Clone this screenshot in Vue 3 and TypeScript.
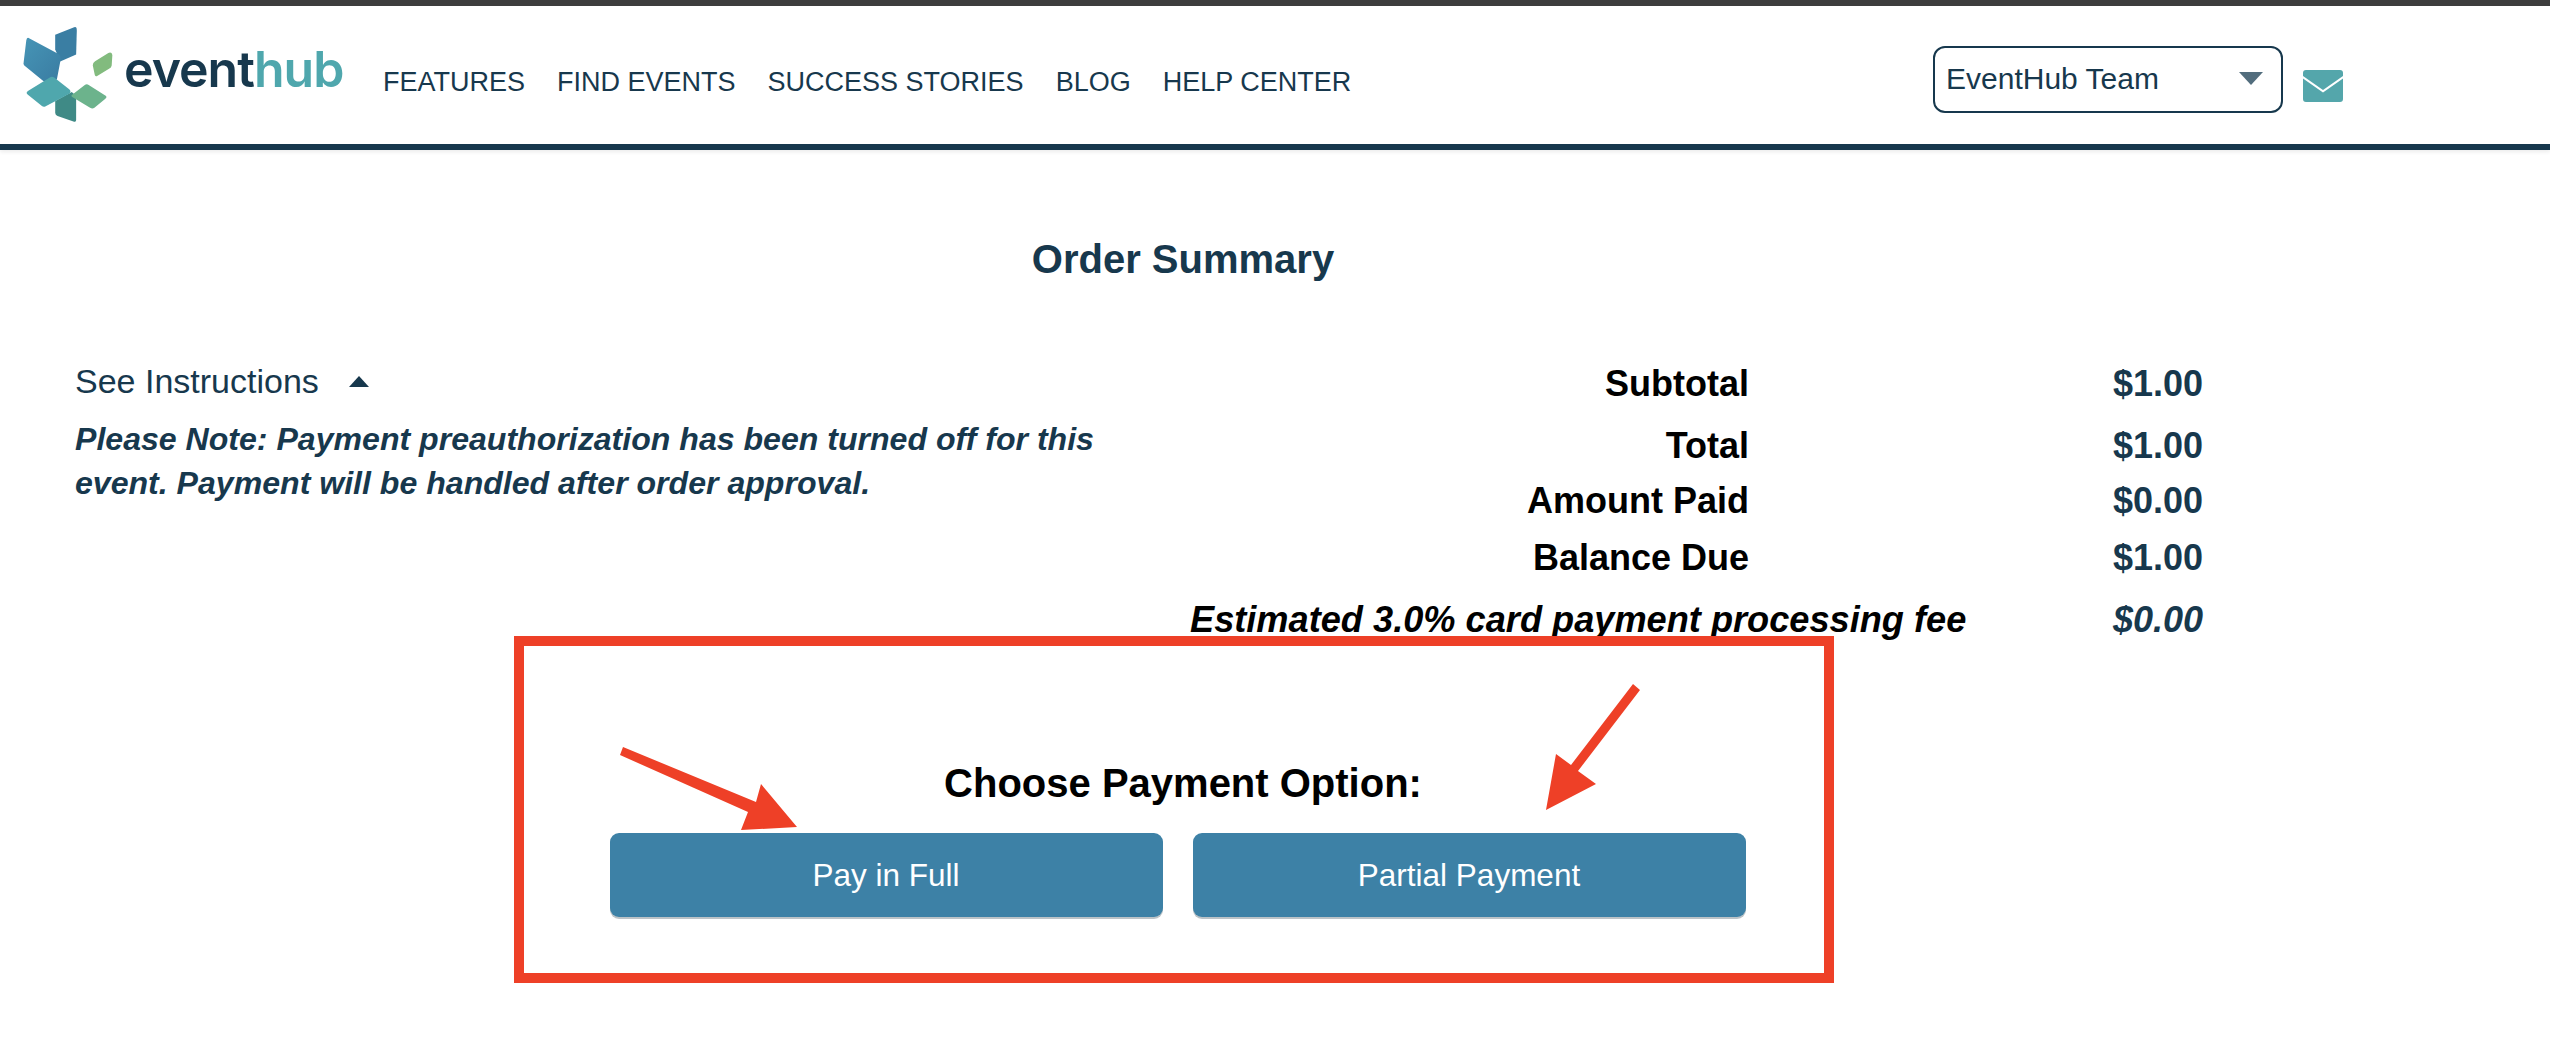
<script setup lang="ts">
const navLinks: string[] = ['FEATURES', 'FIND EVENTS', 'SUCCESS STORIES', 'BLOG', 'HELP CENTER']

const totals = [
  { label: 'Subtotal', value: '$1.00', height: 64 },
  { label: 'Total', value: '$1.00', height: 60 },
  { label: 'Amount Paid', value: '$0.00', height: 50 },
  { label: 'Balance Due', value: '$1.00', height: 64 },
]
</script>

<template>
  <div class="page">
    <header class="topbar">
      <svg class="logo-mark" viewBox="60 70 290 310" aria-hidden="true">
        <defs>
          <linearGradient id="blueGrad" x1="0" y1="0" x2="1" y2="1">
            <stop offset="0" stop-color="#4695b6" />
            <stop offset="1" stop-color="#3a7ca2" />
          </linearGradient>
        </defs>
        <path fill="#3a7ea3" d="M165 105 L222 83 Q230 80 230 92 L228 165 L180 186 L165 150 Z" />
        <path fill="url(#blueGrad)" d="M85 115 L175 163 Q183 170 181 182 L170 240 L130 245 L72 198 Q68 194 70 188 L78 122 Q80 113 85 115 Z" />
        <path fill="#3f8a86" d="M165 305 L215 278 L228 290 L228 362 Q228 369 222 367 L172 350 Q165 347 165 340 Z" />
        <path fill="#4fa7ad" d="M150 233 Q156 230 162 234 L208 270 Q215 277 206 284 L135 321 Q130 323 125 320 L82 285 Q75 280 84 274 Z" />
        <path fill="#6cb38c" d="M255 256 Q260 253 267 257 L318 290 Q322 294 316 298 L283 325 Q277 329 270 325 L215 292 Q212 288 216 286 Z" />
        <path fill="#82bb7e" d="M285 185 L325 160 Q335 156 337 166 L335 198 Q334 205 327 208 L290 230 Q285 232 284 226 L278 197 Q278 190 285 185 Z" />
      </svg>
      <div class="logo-text">event<span>hub</span></div>

      <nav class="nav">
        <a v-for="link in navLinks" :key="link" class="nav-link">{{ link }}</a>
      </nav>

      <div class="team-select">
        <span>EventHub Team</span>
        <i class="select-caret"></i>
      </div>
      <svg class="mail-icon" viewBox="0 0 40 32" aria-hidden="true">
        <path fill="#54a6ab" d="M3 0 H37 Q40 0 40 3 V6 L20 20 L0 6 V3 Q0 0 3 0 Z" />
        <path fill="#54a6ab" d="M0 8.5 L20 22.5 L40 8.5 V29 Q40 32 37 32 H3 Q0 32 0 29 Z" />
      </svg>
    </header>

    <main class="content">
      <h1 class="title">Order Summary</h1>

      <div class="summary">
        <section class="instructions">
          <div class="see-instructions">
            See Instructions
            <i class="up-caret"></i>
          </div>
          <p class="note">
            Please Note: Payment preauthorization has been turned off for this event. Payment will be handled after order approval.
          </p>
        </section>

        <section class="totals">
          <div
            v-for="row in totals"
            :key="row.label"
            class="total-row"
            :style="{ height: row.height + 'px' }"
          >
            <span class="total-label">{{ row.label }}</span>
            <span class="total-value">{{ row.value }}</span>
          </div>
          <div class="total-row fee-row">
            <span class="total-label">Estimated 3.0% card payment processing fee</span>
            <span class="total-value">$0.00</span>
          </div>
        </section>
      </div>

      <section class="payment-box">
        <h2 class="payment-title">Choose Payment Option:</h2>
        <div class="payment-buttons">
          <button class="pay-btn">Pay in Full</button>
          <button class="pay-btn">Partial Payment</button>
        </div>
      </section>
    </main>

    <!-- red annotation arrows drawn over the page -->
    <svg class="arrows" viewBox="0 0 2550 1054" aria-hidden="true">
      <polygon fill="#ee4027" points="623,747 620,755 748,812 741,830 797,827 761,784 756,802" />
      <polygon fill="#ee4027" points="1633,684 1640,690 1578,771 1596,784 1546,810 1556,754 1571,765" />
    </svg>
  </div>
</template>

<style>
html,
body {
  margin: 0;
  background: #fff;
}
</style>

<style scoped>
.page {
  position: relative;
  width: 2550px;
  height: 1054px;
  overflow: hidden;
  background: #fff;
  font-family: 'Liberation Sans', Arial, sans-serif;
  color: #17384d;
}

.topbar {
  display: flex;
  align-items: flex-start;
  box-sizing: border-box;
  height: 150px;
  border-top: 6px solid #3d3d3d;
  border-bottom: 6px solid #17384d;
  box-shadow: 0 2px 4px rgba(0, 0, 0, 0.08);
}

.logo-mark {
  flex: none;
  width: 97px;
  height: 103px;
  margin: 17px 0 0 20px;
}

.logo-text {
  flex: none;
  width: 220px;
  margin: 33px 0 0 7px;
  font-family: Inter, sans-serif;
  font-size: 50px;
  font-weight: 600;
  line-height: 60px;
  letter-spacing: -1px;
  color: #17384d;
}

.logo-text span {
  color: #4fa7ad;
}

.nav {
  display: flex;
  gap: 32px;
  margin: 57px 0 0 39px;
}

.nav-link {
  font-size: 27px;
  line-height: 38px;
  white-space: nowrap;
}

.team-select {
  display: flex;
  align-items: center;
  justify-content: space-between;
  box-sizing: border-box;
  width: 350px;
  height: 67px;
  margin: 40px 0 0 auto;
  padding: 0 18px 2px 11px;
  border: 2px solid #17384d;
  border-radius: 12px;
  font-size: 30px;
}

.select-caret {
  width: 0;
  height: 0;
  border-left: 12px solid transparent;
  border-right: 12px solid transparent;
  border-top: 13px solid #526d7d;
}

.mail-icon {
  flex: none;
  width: 40px;
  height: 32px;
  margin: 64px 207px 0 20px;
}

.content {
  display: flex;
  flex-direction: column;
}

.title {
  margin: 85px 0 0;
  width: 2366px;
  font-size: 40px;
  line-height: 48px;
  font-weight: 700;
  text-align: center;
}

.summary {
  display: flex;
  margin-top: 67px;
}

.instructions {
  flex: none;
  width: 1060px;
  margin-left: 75px;
}

.see-instructions {
  display: flex;
  align-items: center;
  gap: 30px;
  height: 62px;
  font-size: 34px;
}

.up-caret {
  width: 0;
  height: 0;
  border-left: 10px solid transparent;
  border-right: 10px solid transparent;
  border-bottom: 11px solid #17384d;
}

.note {
  margin: 5px 0 0;
  font-size: 32.1px;
  line-height: 44px;
  font-weight: 700;
  font-style: italic;
}

.totals {
  flex: none;
  width: 1013px;
  margin-left: 55px;
  padding-top: 2px;
}

.total-row {
  display: flex;
  align-items: center;
  justify-content: space-between;
}

.total-label {
  width: 559px;
  font-size: 36px;
  font-weight: 700;
  color: #000;
  text-align: right;
}

.total-value {
  font-size: 36px;
  font-weight: 700;
}

.fee-row {
  height: 60px;
}

.fee-row .total-label {
  width: 776px;
  font-size: 36.2px;
  font-style: italic;
  white-space: nowrap;
}

.fee-row .total-value {
  font-style: italic;
}

.payment-box {
  display: flex;
  flex-direction: column;
  align-items: center;
  box-sizing: border-box;
  width: 1320px;
  height: 347px;
  margin: -14px 0 0 514px;
  padding-top: 112px;
  border: 10px solid #ee4027;
}

.payment-title {
  margin: 0 0 0 18px;
  font-size: 40px;
  line-height: 50px;
  font-weight: 700;
  color: #000;
}

.payment-buttons {
  display: flex;
  gap: 30px;
  margin: 25px 0 0 7px;
}

.pay-btn {
  width: 553px;
  height: 84px;
  border: none;
  border-radius: 9px;
  background: #3d81a6;
  box-shadow: 0 2px 0 #bcc3c7;
  color: #fff;
  font-family: inherit;
  font-size: 31.5px;
}

.arrows {
  position: absolute;
  inset: 0;
  width: 2550px;
  height: 1054px;
  pointer-events: none;
}
</style>
